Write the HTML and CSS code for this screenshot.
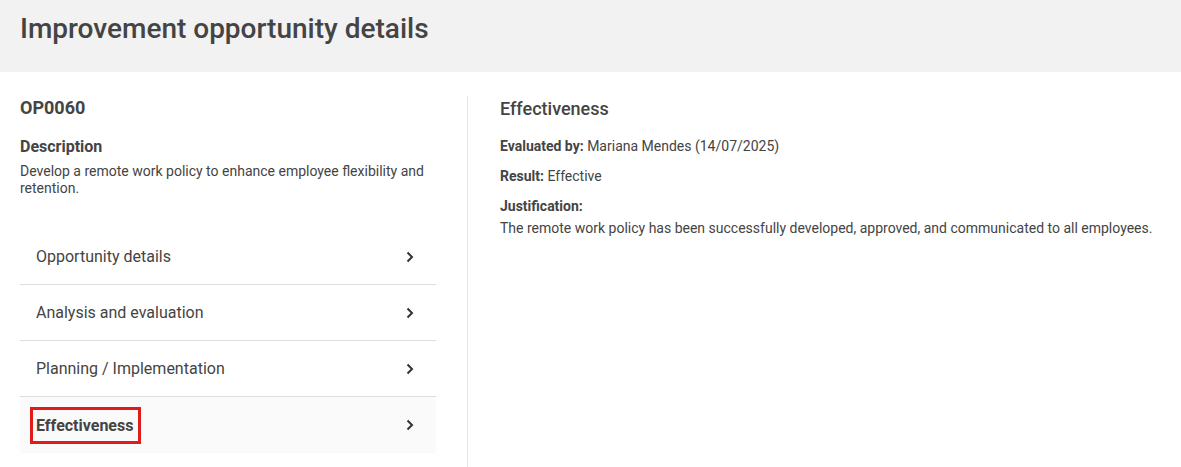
FILE: index.html
```html
<!DOCTYPE html>
<html lang="en">
<head>
<meta charset="utf-8">
<title>Improvement opportunity details</title>
<link rel="stylesheet" href="styles.css">
</head>
<body>
<header class="page-header">
  <h1 class="page-title">Improvement opportunity details</h1>
</header>
<main class="content">
  <section class="left-col">
    <h2 class="code">OP0060</h2>
    <h3 class="desc-title">Description</h3>
    <p class="desc-text">Develop a remote work policy to enhance employee flexibility and retention.</p>
    <nav class="menu">
      <div class="menu-item"><span class="menu-label">Opportunity details</span><svg class="chev" width="8" height="12" viewBox="0 0 8 12"><path d="M1.5 1.5 L6 6 L1.5 10.5" fill="none" stroke="#333" stroke-width="2"/></svg></div>
      <div class="menu-item"><span class="menu-label">Analysis and evaluation</span><svg class="chev" width="8" height="12" viewBox="0 0 8 12"><path d="M1.5 1.5 L6 6 L1.5 10.5" fill="none" stroke="#333" stroke-width="2"/></svg></div>
      <div class="menu-item"><span class="menu-label">Planning / Implementation</span><svg class="chev" width="8" height="12" viewBox="0 0 8 12"><path d="M1.5 1.5 L6 6 L1.5 10.5" fill="none" stroke="#333" stroke-width="2"/></svg></div>
      <div class="menu-item active"><span class="menu-label boxed">Effectiveness</span><svg class="chev" width="8" height="12" viewBox="0 0 8 12"><path d="M1.5 1.5 L6 6 L1.5 10.5" fill="none" stroke="#333" stroke-width="2"/></svg></div>
    </nav>
  </section>
  <div class="divider"></div>
  <section class="right-col">
    <h2 class="section-title">Effectiveness</h2>
    <p class="field"><strong>Evaluated by:</strong> Mariana Mendes (14/07/2025)</p>
    <p class="field"><strong>Result:</strong> Effective</p>
    <p class="field-label"><strong>Justification:</strong></p>
    <p class="field-text">The remote work policy has been successfully developed, approved, and communicated to all employees.</p>
  </section>
</main>
</body>
</html>
```
FILE: styles.css
```css
* { box-sizing: border-box; }
html, body { margin: 0; padding: 0; }
body {
  font-family: Roboto, "Liberation Sans", sans-serif;
  color: #444;
  background: #fff;
  width: 1181px;
  height: 467px;
  overflow: hidden;
}
.page-header {
  background: #f2f2f2;
  height: 72px;
  padding: 12px 20px 0;
}
.page-title {
  margin: 0;
  font-size: 28px;
  font-weight: 500;
  line-height: 34px;
  color: #444;
}
.content {
  display: flex;
  padding: 24px 20px 0;
}
.left-col {
  width: 416px;
  flex: none;
}
.code {
  margin: 0;
  font-size: 18px;
  font-weight: 700;
  line-height: 24px;
}
.desc-title {
  margin: 16px 0 0;
  font-size: 16px;
  font-weight: 700;
  line-height: 22px;
}
.desc-text {
  margin: 5px 0 0;
  font-size: 14px;
  line-height: 17px;
}
.menu {
  margin-top: 32px;
}
.menu-item {
  height: 56px;
  display: flex;
  align-items: center;
  justify-content: space-between;
  padding: 0 22px 0 16px;
  border-bottom: 1px solid #ddd;
  font-size: 16px;
}
.menu-item.active {
  background: #fafafa;
  border-bottom: none;
  font-weight: 700;
}
.menu-label.boxed {
  outline: 3px solid #e01b1b;
  outline-offset: 0;
  padding: 6px 5px 6px 3px;
  margin-left: -3px;
}
.chev { flex: none; }
.divider {
  width: 1px;
  background: #e6e6e6;
  margin: 0 32px 0 31px;
  align-self: stretch;
  height: 371px;
}
.right-col {
  flex: 1;
}
.section-title {
  margin: 1px 0 0;
  font-size: 18px;
  font-weight: 500;
  line-height: 24px;
}
.field {
  margin: 16px 0 0;
  font-size: 14px;
  line-height: 18px;
}
.field + .field { margin-top: 12px; }
.field-label {
  margin: 12px 0 0;
  font-size: 14px;
  line-height: 18px;
}
.field-text {
  margin: 4px 0 0;
  font-size: 14px;
  line-height: 18px;
}
strong { font-weight: 700; }
```
